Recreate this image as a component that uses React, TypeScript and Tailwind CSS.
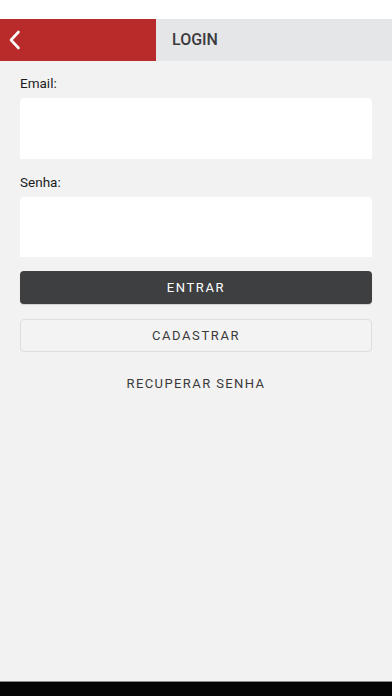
import { useState } from "react";

export default function App() {
  const [email, setEmail] = useState("");
  const [senha, setSenha] = useState("");

  return (
    <div
      className="w-[392px] h-[696px] flex flex-col bg-[#f2f2f2] overflow-hidden"
      style={{ fontFamily: "Roboto, 'Liberation Sans', sans-serif" }}
    >
      {/* Status bar */}
      <div className="h-[19px] bg-white shrink-0" />

      {/* Header */}
      <header className="h-[42px] flex shrink-0">
        <div className="w-[156px] bg-[#b92a2a] flex items-center pl-[8px]">
          <svg width="13" height="20" viewBox="0 0 13 20" fill="none">
            <path
              d="M10.5 2 L3 10 L10.5 18"
              stroke="white"
              strokeWidth="2.6"
              strokeLinecap="round"
              strokeLinejoin="round"
            />
          </svg>
        </div>
        <div className="flex-1 bg-[#e5e6e8] flex items-center pl-[16px]">
          <span className="text-[16px] font-medium text-[#3b3b3d]">LOGIN</span>
        </div>
      </header>

      {/* Form */}
      <main className="flex-1 flex flex-col px-[20px]">
        <label className="mt-[14px] text-[13.5px] leading-[16px] text-[#1c1c1c]">Email:</label>
        <input
          type="email"
          value={email}
          onChange={(e) => setEmail(e.target.value)}
          className="mt-[7px] h-[61px] w-full bg-white rounded-t-[4px] outline-none px-3"
        />

        <label className="mt-[15px] text-[13.5px] leading-[16px] text-[#1c1c1c]">Senha:</label>
        <input
          type="password"
          value={senha}
          onChange={(e) => setSenha(e.target.value)}
          className="mt-[7px] h-[60px] w-full bg-white rounded-t-[4px] outline-none px-3"
        />

        <button className="mt-[14px] h-[33px] w-full rounded-[4px] bg-[#3e3f41] text-white text-[13px] tracking-[1.6px] shadow-[0_1px_1px_rgba(0,0,0,0.15)]">
          ENTRAR
        </button>

        <button className="mt-[15px] h-[33px] w-full rounded-[4px] bg-[#f3f3f3] border border-[#dedede] text-[#3a3a3a] text-[13px] tracking-[1.6px]">
          CADASTRAR
        </button>

        <button className="mt-[22px] text-[13px] tracking-[1.4px] text-[#3a3a3a] self-center">
          RECUPERAR SENHA
        </button>
      </main>

      {/* Bottom bar */}
      <div className="h-[15px] bg-[#050505] border-t border-[#8a8a8a] shrink-0" />
    </div>
  );
}
